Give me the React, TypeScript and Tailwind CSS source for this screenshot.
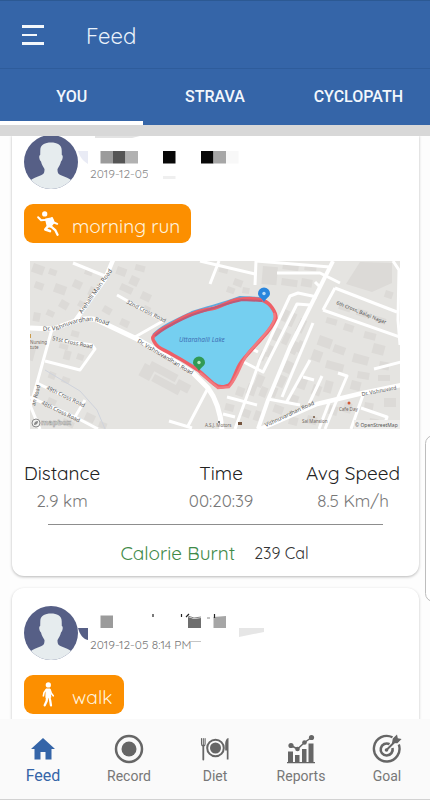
import React from "react";

const TABS = ["YOU", "STRAVA", "CYCLOPATH"];

function Avatar() {
  return (
    <svg viewBox="0 0 54 54" className="h-[54px] w-[54px] shrink-0" role="img" aria-label="Profile picture">
      <defs>
        <clipPath id="avatarClip">
          <circle cx="27" cy="27" r="27" />
        </clipPath>
      </defs>
      <g clipPath="url(#avatarClip)">
        <rect width="54" height="54" fill="#565f86" />
        <path
          d="M27 7.500c6 0 10.500 2 10.700 7.500l.1 5c1.700.3 1 5-.8 6.500-.6 3.500-2.500 5.500-3.500 7.500 0 3.500.5 5 3.500 6.200 4 1.500 8.500 3 11.500 6V54H5.500v-7.800c3-3 7.500-4.500 11.500-6 3-1.200 3.500-2.700 3.500-6.200-1-2-2.900-4-3.500-7.500-1.800-1.500-2.500-6.200-.8-6.500l.1-5C16.500 9.500 21 7.500 27 7.500z"
          fill="#e6ecee"
        />
      </g>
    </svg>
  );
}

function RunIcon() {
  return (
    <svg viewBox="108 272 72 76" className="h-[25px] w-6" fill="none" stroke="#fff" strokeLinecap="round" strokeLinejoin="round" aria-hidden="true">
      <circle cx="134" cy="281" r="8" fill="#fff" stroke="none" />
      <path d="M114 291l9 9 16-1" strokeWidth="6" />
      <path d="M137 297l20-4 4 16-10 12-9-3z" fill="#fff" strokeWidth="4" />
      <path d="M156 294l6 13 10 4" strokeWidth="6" />
      <path d="M146 316l-10 12 14 5" strokeWidth="8" />
      <path d="M152 318l14 12 7 14" strokeWidth="7" />
    </svg>
  );
}

function WalkIcon() {
  return (
    <svg viewBox="108 306 72 76" className="h-[25px] w-6" fill="none" stroke="#fff" strokeLinecap="round" strokeLinejoin="round" aria-hidden="true">
      <circle cx="145" cy="315" r="8" fill="#fff" stroke="none" />
      <path d="M139 328h10l3 24h-14z" fill="#fff" strokeWidth="4" />
      <path d="M139 329l-7 9-2 10M150 329l4 11 6 8" strokeWidth="5" />
      <path d="M141 352l-1 12-6 13M148 352l3 12 2 13" strokeWidth="7" />
    </svg>
  );
}

const BUILDINGS: [number, number, number, number, number][] = [
  [34, 263, 12, 9, 20], [50, 268, 8, 6, 20], [36, 281, 9, 7, 20], [56, 283, 12, 9, 20], [75, 279, 9, 8, 25],
  [62, 299, 9, 8, 30], [48, 309, 8, 6, 25], [34, 312, 7, 9, 10], [86, 268, 8, 6, 20], [91, 286, 6, 9, 25],
  [118, 266, 10, 8, 20], [132, 275, 9, 9, 25], [122, 283, 13, 7, 25], [105, 305, 9, 7, 30], [122, 318, 9, 7, 25],
  [143, 291, 10, 8, 25], [145, 305, 7, 6, 25], [136, 264, 10, 6, 15], [72, 330, 8, 6, 15], [65, 350, 7, 9, 15],
  [60, 343, 9, 5, 15], [78, 353, 7, 6, 20], [50, 371, 7, 7, 20], [63, 376, 8, 6, 20], [49, 397, 9, 6, 25],
  [87, 412, 10, 8, 25], [64, 418, 12, 6, 25], [100, 421, 8, 6, 20], [80, 300, 7, 6, 30], [30, 348, 6, 12, 15],
  [220, 266, 9, 6, 15], [235, 278, 9, 7, 20], [228, 286, 8, 6, 20], [243, 287, 7, 6, 10], [263, 266, 15, 18, 5],
  [282, 278, 16, 7, 8], [283, 264, 16, 5, 8], [305, 264, 12, 6, 8], [302, 278, 11, 8, 10],
  [386, 290, 8, 7, 18], [340, 303, 12, 6, 18], [358, 308, 11, 7, 18],
  [377, 316, 10, 6, 18], [327, 317, 11, 6, 15], [345, 323, 10, 7, 18], [365, 331, 12, 7, 15], [320, 335, 14, 10, 20],
  [314, 349, 10, 11, 20], [335, 344, 12, 8, 20], [327, 360, 18, 8, 15], [354, 353, 16, 9, 15], [374, 343, 12, 10, 15],
  [380, 361, 10, 8, 10], [358, 371, 12, 7, 10], [378, 375, 12, 6, 0], [283, 308, 8, 12, 25], [292, 312, 6, 14, 25],
  [276, 327, 8, 13, 25], [286, 332, 6, 12, 25], [301, 318, 7, 14, 25], [293, 340, 8, 13, 25], [270, 345, 7, 12, 25],
  [262, 350, 6, 10, 25], [287, 360, 8, 12, 25], [280, 374, 8, 12, 25], [300, 340, 6, 12, 25], [258, 374, 8, 12, 22],
  [249, 383, 9, 11, 20], [238, 386, 8, 9, 20], [262, 386, 7, 10, 22], [272, 386, 7, 10, 22], [243, 408, 9, 8, 20],
  [256, 410, 6, 10, 20], [226, 403, 9, 7, 15], [275, 404, 10, 8, 20], [300, 376, 9, 12, 20], [314, 384, 9, 10, 20],
  [326, 380, 8, 12, 15], [352, 380, 10, 9, 15], [292, 394, 8, 8, 20], [308, 415, 10, 8, 15], [330, 405, 9, 9, 15],
  [345, 402, 8, 10, 15], [365, 402, 9, 8, 10], [384, 398, 12, 9, 0], [370, 418, 9, 7, 10], [290, 416, 9, 8, 15],
  [145, 363, 12, 14, 28], [152, 361, 30, 8, 28], [155, 374, 30, 8, 28], [179, 379, 14, 9, 28],
];

const ROADS = [
  "M73 263L105 276", "M117 295L163 321L135 337", "M52 329L37 383L30 407",
  "M60 340L92 345L95 349L80 370L45 361", "M37 383L82 405", "M85 400L75 417", "M30 397L77 418L98 429",
  "M30 405L40 429", "M208 388L188 426", "M169 421L192 428", "M210 284L219 261", "M200 261L255 274", "M255 285L256 261",
  "M256 261L330 267", "M277 273L320 273L340 283", "M317 297L298 293L290 296L260 360L235 429",
  "M310 305L297 304L263 372L238 359", "M244 345L258 352", "M313 323L282 397", "M310 360L286 403", "M303 377L314 380",
  "M322 376L309 404", "M323 310L400 337", "M335 288L323 310", "M335 288L397 312", "M393 261L399 270L398 320L400 345",
  "M374 369L401 362", "M338 373L347 376L338 397L325 429", "M363 395L351 429", "M361 408L387 417L383 429",
  "M227 397L257 405", "M268 399L300 405", "M223 414L235 417", "M330 400L319 429", "M315 282L320 287",
];

function RouteMap() {
  const lake =
    "M153 337C157 331 163 328 170 325C178 320 185 316 192 314C200 310 207 310 215 308C225 305 232 299 242 299C251 298 259 299 264 301C270 303 276 312 276 318C272 327 269 331 263 337C257 344 252 349 247 355C242 361 239 364 237 370C233 379 231 386 226 386C221 388 218 387 214 384C208 379 203 374 198 370C190 365 181 359 173 355C164 349 158 349 155 343C153 340 152 339 153 337Z";
  return (
    <svg
      viewBox="30 261 370 168"
      className="block w-full font-['Noto_Sans',sans-serif]"
      role="img"
      aria-label="Map of the route around Uttarahalli Lake"
    >
      <defs>
        <path id="mainRoadLabel" d="M43 331L58 330Q75 321 93 321Q102 322 125 333" />
      </defs>
      <rect x="30" y="261" width="370" height="168" fill="#e5e4e1" />
      <g fill="#dcdad7">
        {BUILDINGS.map(([x, y, w, h, r]) => (
          <rect key={`${x}-${y}`} x={x} y={y} width={w} height={h} transform={`rotate(${r} ${x} ${y})`} />
        ))}
        <path d="M346 284L360 262L392 263L392 283L372 292z" />
      </g>
      <path d="M45 370L80 391L97 410L105 429" fill="none" stroke="#cfd3dc" strokeWidth="1" />
      <g fill="none" stroke="#fff" strokeLinejoin="round">
        {ROADS.map((d) => (
          <path key={d} d={d} strokeWidth="3" />
        ))}
        <path d="M113 260L105 279L90 300L75 321" strokeWidth="4.500" />
        <path d="M333 261L312 303L290 347L268 400L258 429" strokeWidth="4" />
        <path d="M30 328L53 329L75 321Q88 317 97 320L137 339L160 352L193 373L208 388Q220 404 222 430" strokeWidth="5" />
        <path d="M258 430L317 404L363 393L401 385" strokeWidth="4.500" />
      </g>
      <path d={lake} fill="#75cff0" />
      <path d="M153 335C160 327 175 320 192 312C210 306 225 303 240 297L262 298" fill="none" stroke="#5fa9dd" strokeWidth="2" />
      <path d={lake} fill="none" stroke="#ee5f67" strokeWidth="3.500" strokeLinejoin="round" />
      <path d="M155 336C165 327 178 321 192 315C210 309 228 303 242 300L262 301" fill="none" stroke="#bd5a78" strokeWidth="2" />
      <path d="M274 313C278 322 265 334 249 352C241 361 239 376 229 387L218 388L200 373" fill="none" stroke="#f27b80" strokeWidth="2.500" />
      <g fill="#4f4f4f" fontSize="6">
        <text transform="translate(82 314) rotate(-55)">Arehalli Main Road</text>
        <text transform="translate(126 303) rotate(27)" fontSize="5.500">32nd Cross Road</text>
        <text>
          <textPath href="#mainRoadLabel">Dr. Vishnuvardhan Road</textPath>
        </text>
        <text transform="translate(52 340) rotate(12)" fontSize="5.500">51st Cross Road</text>
        <text transform="translate(137 342) rotate(31)" fontSize="5.700">Dr. Vishnuvardhan Road</text>
        <text transform="translate(46 389) rotate(26)" fontSize="5.500">49th Cross Road</text>
        <text transform="translate(41 404) rotate(26)" fontSize="5.500">48th Cross Road</text>
        <text transform="translate(35 406) rotate(-75)" fontSize="5.500">an Road</text>
        <text transform="translate(336 304) rotate(22)" fontSize="5">6th Cross, Balaji Nagar</text>
        <text transform="translate(266 427) rotate(-25)" fontSize="5.500">Vishnuvardhan Road</text>
        <text transform="translate(362 396) rotate(-11)" fontSize="5.200">Dr. Vishnuvard</text>
      </g>
      <g fill="#71685f" fontSize="4.500">
        <text x="30" y="344">Nursing</text>
        <text x="30" y="349">tute</text>
        <text x="205" y="427">A.S.J. Motors</text>
        <text x="302" y="423">Sai Mansion</text>
        <text x="339" y="411">Cafe Day</text>
      </g>
      <rect x="30" y="334" width="1" height="4" fill="#c99a4a" />
      <rect x="238" y="422" width="4" height="3" fill="#75553e" />
      <circle cx="219" cy="422" r="1" fill="#555" />
      <circle cx="314" cy="417" r="1" fill="#75553e" />
      <circle cx="349" cy="403" r="1.500" fill="#d05a35" />
      <text x="179" y="342" fontSize="6.500" fontStyle="italic" fill="#3f6fb5">
        Uttarahalli Lake
      </text>
      <g>
        <path d="M264 302C262 298 258 297 258 293.500a6 6 0 0 1 12 0C270 297 266 298 264 302z" fill="#2a86dd" />
        <circle cx="264" cy="293.500" r="1.700" fill="#b9dcf7" />
        <path d="M199 371C197 367 193 366 193 362.500a6 6 0 0 1 12 0C205 366 201 367 199 371z" fill="#329a55" />
        <circle cx="199" cy="362.500" r="1.700" fill="#b8e6c4" />
      </g>
      <g stroke="#8b8b8b" strokeWidth="1" fill="#f2f2f0">
        <circle cx="36" cy="423" r="4" />
        <path d="M34 425q0-4 4-4q0 4-4 4z" fill="#8b8b8b" stroke="none" />
      </g>
      <text x="41" y="425" fontSize="7.500" fontWeight="700" fill="#f4f4f2" stroke="#a3a3a1" strokeWidth=".6">
        mapbox
      </text>
      <rect x="354" y="420" width="46" height="9" fill="#eeedeb" />
      <text x="355" y="427" fontSize="5" fill="#555">
        © OpenStreetMap
      </text>
    </svg>
  );
}

/* Pixelated cover over the first athlete's name */
function NameCoverA() {
  return (
    <svg viewBox="78 136 186 44" className="absolute top-px left-[54px] h-11 w-[186px]" aria-hidden="true">
      <path d="M78 151h10v13c-5-3-8-7-10-13z" fill="#e9ebf5" />
      <path d="M95 136h45l-8 2H95z" fill="#e3e3e3" />
      <rect x="100.500" y="151" width="12.500" height="12.500" fill="#9b9b9b" />
      <rect x="113" y="151" width="12.500" height="12.500" fill="#555" />
      <rect x="125.500" y="151" width="12.500" height="12.500" fill="#b1b1b1" />
      <rect x="163" y="151" width="12.500" height="12.500" fill="#080808" />
      <rect x="201" y="151" width="12.500" height="12.500" fill="#080808" />
      <rect x="213.500" y="151" width="12.500" height="12.500" fill="#a6a6a6" />
      <rect x="226" y="151" width="12.500" height="12.500" fill="#f8f8f8" />
      <rect x="163" y="176" width="12.500" height="3" fill="#efefef" />
    </svg>
  );
}

/* Pixelated cover over the second athlete's name */
function NameCoverB() {
  return (
    <svg viewBox="78 606 190 40" className="absolute top-0 left-[54px] h-10 w-[190px]" aria-hidden="true">
      <path d="M78 628h10v12c-5-1-8-5-10-12z" fill="#565f86" />
      <rect x="100.500" y="615.500" width="12.500" height="12.500" fill="#9b9b9b" />
      <path d="M188 617l6 2 7-1v10h-13z" fill="#6e6e6e" />
      <path d="M213.500 617l12.500-1v12h-12.500z" fill="#a6a6a6" />
      <path d="M239 628h25v4l-25 5z" fill="#e6e6e6" />
      <path d="M153 614v3M181.500 614v3M189 614l-3 3M214.500 614v4" stroke="#222" strokeWidth="1.200" />
      <path d="M188 616l6 2 7-1M207 618h3" stroke="#888" strokeWidth="1" fill="none" />
      <path d="M190 641.500h11" stroke="#c5c5c5" strokeWidth="1" />
    </svg>
  );
}

function ActivityBadge({ icon, label, className }: { icon: React.ReactNode; label: string; className: string }) {
  return (
    <div className={`mt-[15px] flex h-[39px] items-center rounded-[9px] bg-[#fc8f00] pl-3 text-[19px] text-[#fff3df] ${className}`}>
      {icon}
      <span className="mt-1.5 ml-3">{label}</span>
    </div>
  );
}

function Stat({ label, value, className }: { label: string; value: string; className?: string }) {
  return (
    <div className={`text-center ${className ?? ""}`}>
      <dt className="text-[19px] leading-7 text-[#222]">{label}</dt>
      <dd className="text-[17px] leading-7 text-[#777]">{value}</dd>
    </div>
  );
}

function HomeIcon() {
  return (
    <svg viewBox="0 0 24 22" className="h-[22px] w-6" fill="#3565a8" aria-hidden="true">
      <path d="M12 0L24 11h-3.500v10.500h-6V14h-5v7.500h-6V11H0z" />
    </svg>
  );
}

function RecordIcon() {
  return (
    <svg viewBox="0 0 30 30" className="h-[30px] w-[30px]" aria-hidden="true">
      <circle cx="15" cy="15" r="13" fill="none" stroke="#666" strokeWidth="2.500" />
      <circle cx="15" cy="15" r="7.500" fill="#666" />
    </svg>
  );
}

function DietIcon() {
  return (
    <svg viewBox="0 0 30 24" className="h-6 w-[30px]" fill="none" stroke="#666" aria-hidden="true">
      <circle cx="15.500" cy="11" r="8.300" strokeWidth="2" />
      <circle cx="15.500" cy="11" r="5.500" fill="#666" stroke="none" />
      <path d="M1.500 1.500v5.500q0 2 1.800 2t1.800-2V1.500M3.300 1.500v7" strokeWidth="1.100" strokeLinecap="round" />
      <path d="M3.300 8.500v14" strokeWidth="1.800" strokeLinecap="round" />
      <path d="M28.500 1v21.500h-1.700v-9h-1.600V7c0-3 1.500-6 3.300-6z" fill="#666" stroke="none" />
    </svg>
  );
}

function ReportsIcon() {
  return (
    <svg viewBox="0 0 30 30" className="h-[30px] w-[30px]" fill="#666" aria-hidden="true">
      <path d="M2 17.500h5V28H9v-7h4.500v7H16V15h4.500v13h2V9.500H27.500V28H29v1.200H1V28h1z" />
      <path d="M5 11.500l6.500 3.500 7-6.500 7-5" fill="none" stroke="#666" strokeWidth="1.500" />
      <circle cx="5" cy="11.500" r="2.600" />
      <circle cx="11.500" cy="15" r="2.300" />
      <circle cx="18.500" cy="8.500" r="2.300" />
      <circle cx="25.500" cy="3.500" r="2.600" />
    </svg>
  );
}

function GoalIcon() {
  return (
    <svg viewBox="0 0 30 30" className="h-[30px] w-[30px]" fill="none" stroke="#666" aria-hidden="true">
      <path d="M20.500 3.300A12.800 12.800 0 1 0 26.800 10.500" strokeWidth="2.400" />
      <path d="M17.500 10.200A6 6 0 1 0 20.500 14" strokeWidth="2.600" />
      <path d="M14.500 16L25 5.500" strokeWidth="2" />
      <path d="M20 9l.8-4.500 4.200-4 .8 3.700 3.800.8-4.200 4.200z" fill="#666" stroke="none" />
      <circle cx="14.500" cy="16" r="1.800" fill="#666" stroke="none" />
    </svg>
  );
}

const NAV = [
  { label: "Feed", icon: <HomeIcon />, active: true },
  { label: "Record", icon: <RecordIcon />, active: false },
  { label: "Diet", icon: <DietIcon />, active: false },
  { label: "Reports", icon: <ReportsIcon />, active: false },
  { label: "Goal", icon: <GoalIcon />, active: false },
];

export default function App() {
  return (
    <div className="relative flex h-screen w-full flex-col overflow-hidden bg-[#fdfdfd] font-['Quicksand','Lato',sans-serif]">
      <header className="flex h-[68px] shrink-0 items-center border-t border-[#2c5993] bg-[#3565a8] pl-[22px]">
        <button type="button" aria-label="Open menu" className="flex flex-col gap-1.5">
          <span className="h-[3px] w-[22px] bg-[#f3f7fb]" />
          <span className="h-[2px] w-[15px] bg-[#f3f7fb]" />
          <span className="h-[3px] w-[22px] bg-[#f3f7fb]" />
        </button>
        <h1 className="mt-1 ml-[42px] text-[22px] font-normal text-[#eaf2fb]">Feed</h1>
      </header>

      <div role="tablist" className="grid h-[57px] shrink-0 grid-cols-3 border-t border-[#2e5c9b] bg-[#3565a8] font-['Roboto',sans-serif] text-base font-medium text-[#f2f7fc]">
        {TABS.map((tab, i) => (
          <button
            key={tab}
            type="button"
            role="tab"
            aria-selected={i === 0}
            className={`border-b-4 pt-1 ${i === 0 ? "border-white" : "border-transparent"}`}
          >
            {tab}
          </button>
        ))}
      </div>
      <div className="h-[11px] shrink-0 bg-[#d8d8d8]" />

      <main className="min-h-0 flex-1 overflow-hidden pr-[11px] pl-3">
        <article className="-mt-px rounded-b-xl bg-white px-3 pb-[9px] shadow-[0_1px_3px_rgba(0,0,0,0.28)]">
          <div className="relative flex">
            <Avatar />
            <NameCoverA />
            <time className="mt-[31px] ml-3 h-3 overflow-hidden text-xs leading-4 text-[#888]">2019-12-05</time>
          </div>
          <ActivityBadge icon={<RunIcon />} label="morning run" className="w-[167px]" />
          <div className="mt-[18px] pr-[7px] pl-1.5">
            <RouteMap />
          </div>
          <dl className="mt-[30px] flex pr-[7px]">
            <Stat label="Distance" value="2.9 km" />
            <Stat label="Time" value="00:20:39" className="flex-1 pl-9" />
            <Stat label="Avg Speed" value="8.5 Km/h" />
          </dl>
          <hr className="mt-[9px] mr-6 ml-6 border-[#8d8d8d]" />
          <p className="mt-3.5 flex items-center justify-center gap-[19px] pr-0.5 leading-7">
            <span className="text-[19px] text-[#3f8a48]">Calorie Burnt</span>
            <span className="text-base text-[#333]">239 Cal</span>
          </p>
        </article>

        <article className="mt-3 h-[200px] rounded-xl bg-white px-3 pt-[18px] shadow-[0_1px_3px_rgba(0,0,0,0.24)]">
          <div className="relative flex">
            <Avatar />
            <NameCoverB />
            <time className="mt-[31px] ml-3 text-xs leading-4 text-[#777]">2019-12-05 8:14 PM</time>
          </div>
          <ActivityBadge icon={<WalkIcon />} label="walk" className="w-[100px]" />
        </article>
      </main>

      <aside aria-hidden="true" className="absolute top-[435px] -right-3 h-[167px] w-[17px] rounded-xl border border-[#bdbdbd] bg-white" />

      <nav className="grid h-[81px] shrink-0 grid-cols-5 border-b border-[#d2d2d2] bg-[#fafafa] font-['Roboto',sans-serif]">
        {NAV.map((item) => (
          <button key={item.label} type="button" className="flex flex-col items-center pt-[15px]">
            <span className="flex h-[30px] items-center">{item.icon}</span>
            <span className={item.active ? "text-base leading-6 text-[#3565a8]" : "text-sm leading-6 text-[#777]"}>{item.label}</span>
          </button>
        ))}
      </nav>
    </div>
  );
}
